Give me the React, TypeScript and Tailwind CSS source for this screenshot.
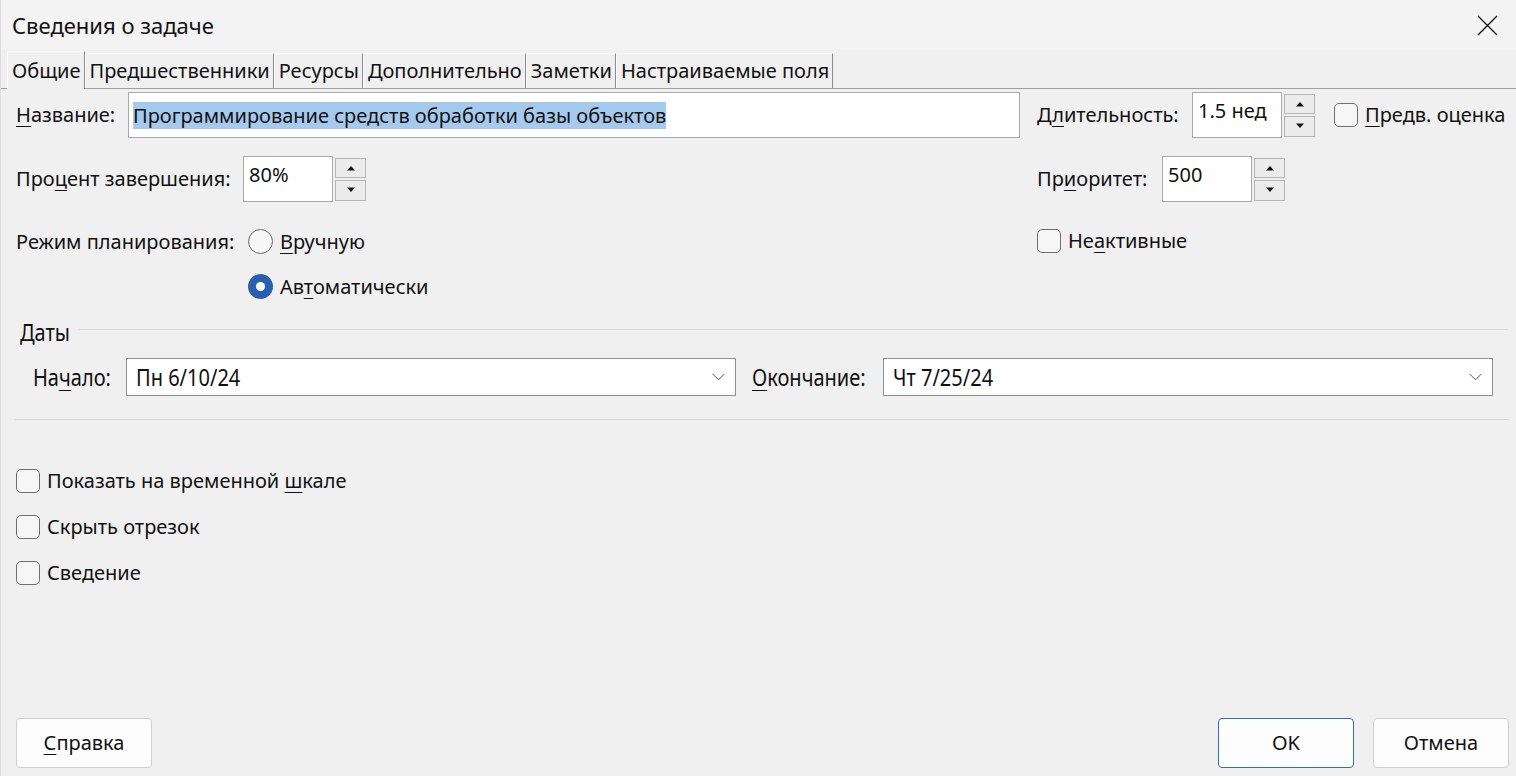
import type { FC, ReactNode } from "react";

// Access-key underline (Windows dialog style)
const U: FC<{ children: ReactNode }> = ({ children }) => (
	<span className="underline decoration-1 underline-offset-[4px]">{children}</span>
);

const Spinner: FC = () => (
	<div className="ml-[2px] flex h-[46px] w-[31px] flex-col justify-center gap-[2px]">
		<div className="flex h-[20px] items-center justify-center border border-[#b5b5b5] bg-[#ececec]">
			<svg width="10" height="6" viewBox="0 0 10 6">
				<path d="M1 5.5 L5 1 L9 5.5 Z" fill="#111" />
			</svg>
		</div>
		<div className="flex h-[21px] items-center justify-center border border-[#b5b5b5] bg-[#ececec]">
			<svg width="10" height="6" viewBox="0 0 10 6">
				<path d="M1 0.5 L5 5 L9 0.5 Z" fill="#111" />
			</svg>
		</div>
	</div>
);

const NumField: FC<{ value: string }> = ({ value }) => (
	<div className="flex items-center">
		<div className="h-[46px] w-[90px] border border-[#a9a9a9] bg-white px-[5px] pt-[6px] leading-[24px]">
			{value}
		</div>
		<Spinner />
	</div>
);

const Check: FC<{ children: ReactNode }> = ({ children }) => (
	<label className="flex h-[24px] items-center gap-[7px] leading-[24px]">
		<span className="h-[24px] w-[24px] shrink-0 rounded-[5px] border border-[#6f6f6f] bg-[#f6f6f6]" />
		<span>{children}</span>
	</label>
);

const Radio: FC<{ checked?: boolean; children: ReactNode }> = ({ checked, children }) => (
	<label className="flex h-[25px] items-center gap-[7px] leading-[25px]">
		{checked ? (
			<span className="flex h-[25px] w-[25px] items-center justify-center rounded-full bg-[#2a5fb0]">
				<span className="h-[9px] w-[9px] rounded-full bg-white" />
			</span>
		) : (
			<span className="h-[25px] w-[25px] rounded-full border border-[#686868] bg-[#f6f6f6]" />
		)}
		<span>{children}</span>
	</label>
);

const DateCombo: FC<{ value: string; width: string }> = ({ value, width }) => (
	<div
		className={`flex h-[38px] items-center justify-between border border-[#8f8f8f] bg-white pl-[9px] pr-[10px] ${width}`}
	>
		<span className="inline-block origin-left scale-x-[0.87] text-[23px] leading-[30px]">{value}</span>
		<svg width="13" height="8" viewBox="0 0 13 8">
			<path d="M0.5 0.8 L6.5 6.8 L12.5 0.8" fill="none" stroke="#555" strokeWidth="1" />
		</svg>
	</div>
);

const tabs = ["Общие", "Предшественники", "Ресурсы", "Дополнительно", "Заметки", "Настраиваемые поля"];

const Button: FC<{ children: ReactNode; primary?: boolean }> = ({ children, primary }) => (
	<button
		type="button"
		className={`h-[50px] w-[136px] rounded-[4px] border bg-[#fdfdfd] text-[20px] ${
			primary ? "border-[#2c6fcd]" : "border-[#cfcfcf]"
		}`}
	>
		{children}
	</button>
);

export default function App() {
	return (
		<div className="flex h-[776px] w-[1516px] flex-col overflow-hidden border-l border-[#dcdcdc] bg-[#f0f0f0] font-['Noto_Sans','Open_Sans',sans-serif] text-[20px] text-[#111]">
			{/* title bar */}
			<div className="flex h-[50px] shrink-0 items-center justify-between bg-[#f3f3f3] pl-[11px] pr-[18px]">
				<span className="text-[22px]">Сведения о задаче</span>
				<svg width="21" height="21" viewBox="0 0 21 21">
					<path d="M1 1 L20 20 M20 1 L1 20" stroke="#111" strokeWidth="1.4" />
				</svg>
			</div>

			{/* tabs */}
			<div className="flex h-[39px] shrink-0 items-end border-b border-[#a0a0a0] pl-[6px]">
				{tabs.map((t, i) =>
					i === 0 ? (
						<div
							key={t}
							className="-mb-px flex h-[38px] items-center border-l border-t border-r border-l-white border-t-white border-r-[#8c8c8c] bg-[#f0f0f0] pl-[4px] pr-[3px]"
						>
							{t}
						</div>
					) : (
						<div
							key={t}
							className="flex h-[35px] items-center border-l border-t border-r border-l-white border-t-white border-r-[#8c8c8c] pl-[4px] pr-[3px]"
						>
							{t}
						</div>
					),
				)}
			</div>

			{/* general tab body */}
			<div className="flex flex-1 flex-col">
				{/* name / duration */}
				<div className="mt-[3px] flex h-[46px] items-center">
					<div className="flex w-[1036px] shrink-0 items-center pl-[15px]">
						<span className="w-[112px]">
							<U>Н</U>азвание:
						</span>
						<div className="flex h-[46px] w-[892px] items-center border border-[#a9a9a9] bg-white px-[4px]">
							<span className="bg-[#a6c9ee] leading-[27px]">Программирование средств обработки базы объектов</span>
						</div>
					</div>
					<span className="w-[155px]">
						Д<U>л</U>ительность:
					</span>
					<NumField value="1.5 нед" />
					<div className="ml-[19px]">
						<Check>
							<U>П</U>редв. оценка
						</Check>
					</div>
				</div>

				{/* percent / priority */}
				<div className="mt-[18px] flex h-[46px] items-center">
					<div className="flex w-[1036px] shrink-0 items-center pl-[15px]">
						<span className="w-[227px]">
							Про<U>ц</U>ент завершения:
						</span>
						<NumField value="80%" />
					</div>
					<span className="w-[125px]">
						Пр<U>и</U>оритет:
					</span>
					<NumField value="500" />
				</div>

				{/* scheduling mode / inactive */}
				<div className="mt-[27px] flex">
					<div className="flex w-[1036px] shrink-0 pl-[15px]">
						<span className="w-[232px] leading-[25px]">Режим планирования:</span>
						<div className="flex flex-col gap-[20px]">
							<Radio>
								<U>В</U>ручную
							</Radio>
							<Radio checked>
								Ав<U>т</U>оматически
							</Radio>
						</div>
					</div>
					<div className="h-[25px]">
						<Check>
							Не<U>а</U>ктивные
						</Check>
					</div>
				</div>

				{/* dates group */}
				<div className="mt-[18px] flex h-[31px] items-center pl-[19px] pr-[8px]">
					<span className="inline-block origin-left scale-x-[0.87] text-[23px] leading-[31px]">Даты</span>
					<div className="mb-[7px] ml-[2px] h-px flex-1 bg-[#dadada]" />
				</div>
				<div className="mt-[10px] flex items-center pl-[32px]">
					<span className="w-[93px]">
						<span className="inline-block origin-left scale-x-[0.87] text-[23px]">
							На<U>ч</U>ало:
						</span>
					</span>
					<DateCombo value="Пн 6/10/24" width="w-[610px]" />
					<span className="ml-[16px] w-[131px]">
						<span className="inline-block origin-left scale-x-[0.87] text-[23px]">
							<U>О</U>кончание:
						</span>
					</span>
					<DateCombo value="Чт 7/25/24" width="w-[610px]" />
				</div>
				<div className="ml-[14px] mr-[7px] mt-[23px] h-px bg-[#dadada]" />

				{/* flags */}
				<div className="mt-[49px] flex flex-col gap-[22px] pl-[15px]">
					<Check>
						Показать на временной <U>ш</U>кале
					</Check>
					<Check>Скрыть отрезок</Check>
					<Check>Сведение</Check>
				</div>

				{/* buttons */}
				<div className="mt-auto mb-[8px] flex items-center pl-[15px] pr-[7px]">
					<Button>
						<U>С</U>правка
					</Button>
					<div className="flex-1" />
					<Button primary>OK</Button>
					<div className="w-[19px]" />
					<Button>Отмена</Button>
				</div>
			</div>
		</div>
	);
}
